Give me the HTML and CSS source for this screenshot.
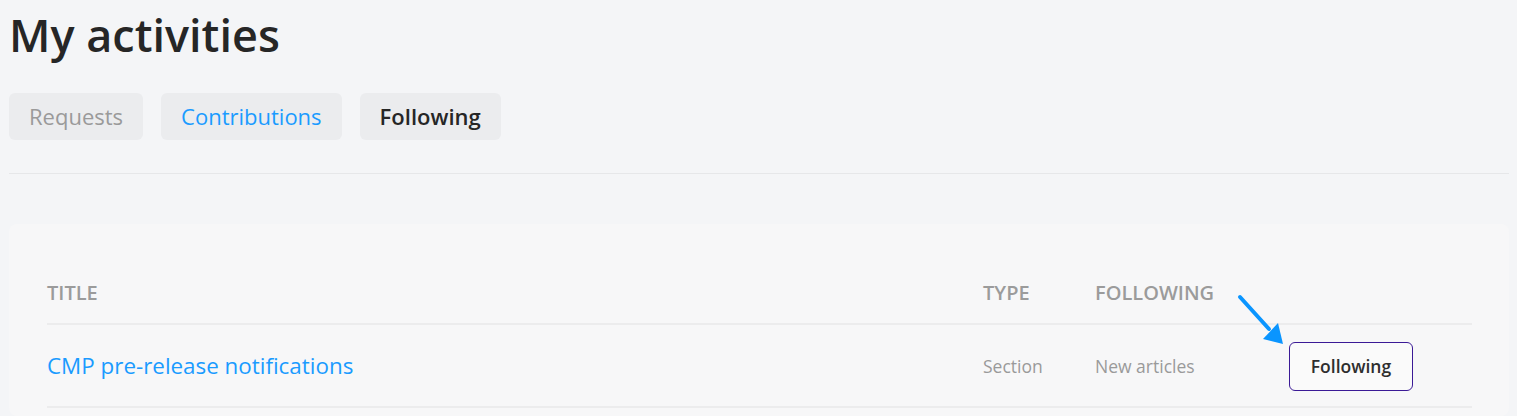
FILE: index.html
```html
<!DOCTYPE html>
<html lang="en">
<head>
<meta charset="utf-8">
<title>My activities</title>
<link rel="stylesheet" href="styles.css">
</head>
<body>
<main class="page">
  <h1 class="page-title">My activities</h1>
  <nav class="tabs">
    <a class="tab tab-muted" href="#">Requests</a>
    <a class="tab tab-link" href="#">Contributions</a>
    <a class="tab tab-active" href="#">Following</a>
  </nav>
  <hr class="divider">
  <section class="card">
    <div class="table">
      <div class="row head">
        <div class="cell">Title</div>
        <div class="cell">Type</div>
        <div class="cell">Following</div>
        <div class="cell"></div>
      </div>
      <div class="row body">
        <div class="cell"><a class="item-link" href="#">CMP pre-release notifications</a></div>
        <div class="cell meta">Section</div>
        <div class="cell meta">New articles</div>
        <div class="cell action">
          <button class="follow-btn" type="button">Following</button>
          <svg class="arrow" width="50" height="54" viewBox="0 0 50 54" aria-hidden="true">
            <line x1="3" y1="3" x2="32" y2="35" stroke="#0a95ff" stroke-width="4" stroke-linecap="round"/>
            <polygon points="26,45 41,29 46,50" fill="#0a95ff"/>
          </svg>
        </div>
      </div>
    </div>
  </section>
</main>
</body>
</html>
```
FILE: styles.css
```css
* { box-sizing: border-box; }
html, body { margin: 0; padding: 0; }
body {
  background: #f4f5f7;
  font-family: "Open Sans", "Liberation Sans", sans-serif;
  color: #2a2a2a;
  height: 416px;
  overflow: hidden;
}
.page {
  padding: 0 8px 0 9px;
}
.page-title {
  margin: 0;
  padding-top: 4px;
  font-size: 45px;
  font-weight: 600;
  line-height: 62px;
  color: #262626;
}
.tabs {
  display: flex;
  gap: 18px;
  margin-top: 27px;
}
.tab {
  display: flex;
  align-items: center;
  height: 47px;
  padding: 0 20px 2px;
  border-radius: 6px;
  background: #ebecee;
  font-size: 22px;
  text-decoration: none;
}
.tab-muted { color: #9a9a9a; }
.tab-link { color: #1a9bff; }
.tab-active { color: #262626; font-weight: 600; }
.divider {
  border: 0;
  height: 1px;
  background: #e6e7e9;
  margin: 33px 0 0;
}
.card {
  margin-top: 50px;
  background: #f7f7f8;
  border-radius: 8px;
  padding: 0 37px 8px 38px;
}
.table {
  display: flex;
  flex-direction: column;
}
.row {
  display: grid;
  grid-template-columns: 936px 112px 194px 183px;
  align-items: center;
  border-bottom: 2px solid #ececed;
}
.row.head {
  height: 101px;
  align-items: end;
  padding-bottom: 17px;
  font-size: 20px;
  font-weight: 600;
  text-transform: uppercase;
  color: #9b9b9b;
}
.row.body {
  height: 83px;
}
.item-link {
  color: #1a9bff;
  font-size: 22.4px;
  text-decoration: none;
}
.meta {
  font-size: 17.5px;
  color: #9a9a9a;
}
.action {
  position: relative;
}
.follow-btn {
  width: 124px;
  height: 49px;
  border: 1px solid #3b1a96;
  border-radius: 6px;
  background: #fafafa;
  font-family: inherit;
  font-size: 17.5px;
  font-weight: 600;
  color: #2e2e2e;
  padding: 0 0 2px;
  margin-top: 2px;
}
.arrow {
  position: absolute;
  left: -52px;
  top: -46px;
}
```
